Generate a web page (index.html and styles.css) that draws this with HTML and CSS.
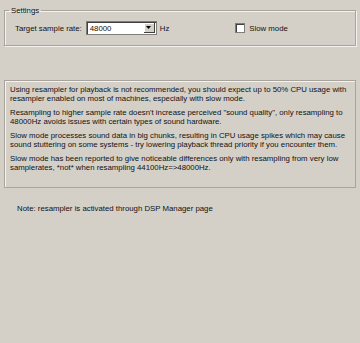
FILE: index.html
```html
<!DOCTYPE html>
<html>
<head>
<meta charset="utf-8">
<link rel="stylesheet" href="styles.css">
</head>
<body>
<div class="page">
  <fieldset class="group">
    <legend class="group-title">Settings</legend>
    <div class="row">
      <span class="lbl">Target sample rate:</span>
      <div class="combo">
        <span class="combo-val">48000</span>
        <span class="combo-btn"><svg width="5" height="3" viewBox="0 0 5 3"><path d="M0 0h5L2.5 3z" fill="#000"/></svg></span>
      </div>
      <span class="unit">Hz</span>
      <label class="check"><span class="box"></span><span>Slow mode</span></label>
    </div>
  </fieldset>

  <div class="info">
    <p>Using resampler for playback is not recommended, you should expect up to 50% CPU usage with resampler enabled on most of machines, especially with slow mode.</p>
    <p>Resampling to higher sample rate doesn't increase perceived "sound quality", only resampling to 48000Hz avoids issues with certain types of sound hardware.</p>
    <p>Slow mode processes sound data in big chunks, resulting in CPU usage spikes which may cause sound stuttering on some systems - try lowering playback thread priority if you encounter them.</p>
    <p>Slow mode has been reported to give noticeable differences only with resampling from very low samplerates, *not* when resampling 44100Hz=&gt;48000Hz.</p>
  </div>

  <div class="note">Note: resampler is activated through DSP Manager page</div>
</div>
</body>
</html>
```

FILE: styles.css
```css
html, body {
  margin: 0;
  padding: 0;
  background: #d4d0c8;
}
body {
  width: 360px;
  height: 343px;
  overflow: hidden;
  font-family: "Liberation Sans", Arial, sans-serif;
  font-size: 7.8px;
  color: #111;
}
.page {
  padding: 6px 4px 0 4px;
}
.group {
  margin: 0;
  padding: 0 0 0 4px;
  height: 38px;
  border: 1px solid #a7a49d;
  box-shadow: inset 1px 1px 0 #f4f3ef, 1px 1px 0 #f4f3ef;
}
.group-title {
  margin: 0;
  padding: 0 2px;
  line-height: 9px;
}
.row {
  display: flex;
  align-items: center;
  height: 14px;
  margin-top: 6px;
  padding-left: 6px;
}
.lbl {
  margin-right: 4px;
}
.combo {
  display: flex;
  align-items: center;
  width: 69px;
  height: 12px;
  background: #fff;
  border: 1px solid #7f7d77;
  box-shadow: inset 1px 1px 0 #404040;
}
.combo-val {
  flex: 1;
  padding-left: 3px;
}
.combo-btn {
  width: 11px;
  height: 10px;
  margin-right: 1px;
  background: #d4d0c8;
  border-right: 1px solid #404040;
  border-bottom: 1px solid #404040;
  box-shadow: inset 1px 1px 0 #fff;
  box-sizing: border-box;
  display: flex;
  align-items: center;
  justify-content: center;
}
.unit {
  margin-left: 3px;
}
.check {
  display: flex;
  align-items: center;
  margin-left: 66px;
}
.box {
  width: 8px;
  height: 8px;
  background: #fff;
  border: 1px solid #7f7d77;
  box-shadow: inset 1px 1px 0 #404040;
  margin-right: 4px;
}
.info {
  margin-top: 34px;
  height: 102px;
  padding: 4px 2px 0 5px;
  border: 1px solid #a7a49d;
  box-shadow: inset 1px 1px 0 #f4f3ef;
}
.info p {
  margin: 0 0 5px 0;
  line-height: 9px;
}
.note {
  margin-top: 16px;
  padding-left: 13px;
  line-height: 9px;
}
```
